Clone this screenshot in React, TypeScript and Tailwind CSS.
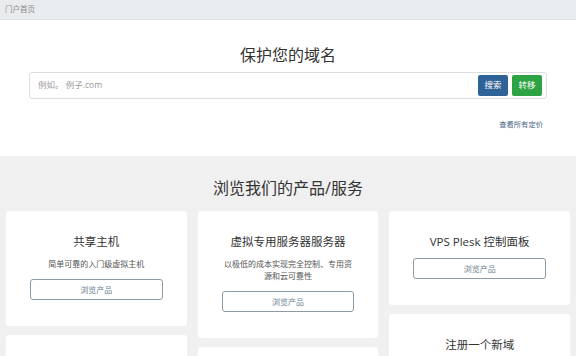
type Product = {
  title: string
  desc?: string
}

const columns: Product[][] = [
  [
    { title: '共享主机', desc: '简单可靠的入门级虚拟主机' },
    { title: '域名转移', desc: '将您的域名转移给我们' },
  ],
  [
    { title: '虚拟专用服务器服务器', desc: '以极低的成本实现完全控制、专用资源和云可靠性' },
    { title: '独立服务器', desc: '高性能的独立物理服务器' },
  ],
  [
    { title: 'VPS Plesk 控制面板' },
    { title: '注册一个新域', desc: '为您的网站选择完美的域名' },
  ],
]

const ProductCard = ({ title, desc }: Product) => (
  <div className="rounded-[3px] bg-white px-[24px] pb-[26px] pt-[22px] text-center">
    <h3 className="mb-[7px] text-[11.5px] leading-[18px] text-[#333]">{title}</h3>
    {desc && <p className="mb-[9px] text-[8px] leading-[12px] text-[#555]">{desc}</p>}
    <button className="block h-[21px] w-full rounded-[3px] border border-[#8c9aa6] bg-white text-[8px] text-[#6e8194]">
      浏览产品
    </button>
  </div>
)

export default function App() {
  return (
    <div
      className="h-[356px] w-[576px] overflow-hidden bg-[#f0f0f0]"
      style={{ fontFamily: '"Open Sans", "Noto Sans CJK SC", sans-serif' }}
    >
      {/* breadcrumb */}
      <div className="flex h-[20px] items-center border-b border-[#e2e5e8] bg-[#e9ecef] px-[5px] text-[7.5px] text-[#8a8a8a]">
        门户首页
      </div>

      {/* domain search */}
      <div className="bg-white px-[29px] pb-[26px] pt-[23px] text-center">
        <h1 className="mb-[5px] text-[16px] leading-[24px] text-[#333]">保护您的域名</h1>
        <div className="flex h-[27px] items-center rounded-[3px] border border-[#dedede] bg-white pl-[8px] pr-[4px]">
          <input
            className="flex-1 bg-transparent text-[8.5px] text-[#333] outline-none placeholder:text-[#9a9a9a]"
            placeholder="例如。 例子.com"
          />
          <div className="flex gap-[4px]">
            <button className="h-[21px] w-[30px] rounded-[2px] bg-[#2f6296] text-[8.5px] text-white">搜索</button>
            <button className="h-[21px] w-[30px] rounded-[2px] bg-[#2ea343] text-[8.5px] text-white">转移</button>
          </div>
        </div>
        <div className="mt-[19px] flex justify-end pr-[4px]">
          <a className="text-[7.3px] leading-[12px] text-[#4a6683]">查看所有定价</a>
        </div>
      </div>

      {/* products */}
      <div className="pt-[20px]">
        <h2 className="mb-[11px] text-center text-[16px] leading-[24px] text-[#333]">浏览我们的产品/服务</h2>
        <div className="grid grid-cols-3 items-start gap-[11px] px-[6px]">
          {columns.map((col, i) => (
            <div key={i} className="flex flex-col gap-[9px]">
              {col.map((p) => (
                <ProductCard key={p.title} {...p} />
              ))}
            </div>
          ))}
        </div>
      </div>
    </div>
  )
}
